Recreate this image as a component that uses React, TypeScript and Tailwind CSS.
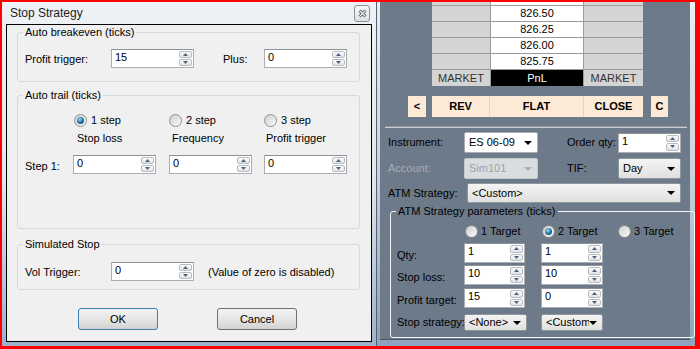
import React from 'react';

const Spinner: React.FC = () => (
  <div className="flex w-[14px] flex-col gap-px py-px pr-px">
    {['up', 'down'].map((d) => (
      <div
        key={d}
        className="flex flex-1 items-center justify-center rounded-[2px] border border-[#b9bcc2] bg-linear-to-b from-[#fbfbfb] to-[#e1e3e6]"
      >
        <svg width="5" height="3" viewBox="0 0 5 3">
          <path d={d === 'up' ? 'M0 3L2.5 0L5 3Z' : 'M0 0L2.5 3L5 0Z'} fill="#4d6082" />
        </svg>
      </div>
    ))}
  </div>
);

interface NumBoxProps {
  value: string;
  className: string;
}

const NumBox: React.FC<NumBoxProps> = ({ value, className }) => (
  <div className={`flex shrink-0 border border-[#abadb3] border-t-[#8f9198] bg-white ${className}`}>
    <span className="flex-1 pl-[3px] pt-px text-black">{value}</span>
    <Spinner />
  </div>
);

const Radio: React.FC<{ checked?: boolean }> = ({ checked }) => (
  <span className="flex h-[13px] w-[13px] shrink-0 items-center justify-center rounded-full border border-[#8e8f8f] bg-linear-to-br from-[#cfcfcf] to-[#fafafa]">
    {checked ? (
      <span className="h-[7px] w-[7px] rounded-full bg-[radial-gradient(circle_at_40%_35%,#9fdcf5,#1b6d9c_55%,#0c3d5e)]" />
    ) : (
      <span className="h-[7px] w-[7px] rounded-full bg-linear-to-br from-[#d6d6d6] to-[#f2f2f2]" />
    )}
  </span>
);

interface ComboProps {
  value: string;
  className: string;
  variant?: 'white' | 'button' | 'disabled';
}

const Combo: React.FC<ComboProps> = ({ value, className, variant = 'button' }) => {
  const look =
    variant === 'disabled'
      ? 'border-[#c3c8cd] bg-[#dadde0] text-[#9ba1a7]'
      : variant === 'white'
        ? 'border-[#abadb3] bg-white text-black'
        : 'border-[#8f969e] bg-linear-to-b from-[#f4f4f4] to-[#e0e0e0] text-black';
  return (
    <div className={`flex shrink-0 items-center justify-between rounded-[2px] border pl-[4px] pr-[5px] ${look} ${className}`}>
      <span className="overflow-hidden whitespace-nowrap">{value}</span>
      <svg width="8" height="4" viewBox="0 0 8 4" className="shrink-0">
        <path d="M0 0H8L4 4Z" fill={variant === 'disabled' ? '#a9afb5' : '#000'} />
      </svg>
    </div>
  );
};

const ladderPrices = ['826.50', '826.25', '826.00', '825.75'];

const StopStrategyDialog: React.FC = () => (
  <div className="flex h-[344px] w-[374px] shrink-0 flex-col bg-linear-to-b from-[#eef1f5] via-[#e3e8ee] to-[#9db1cb] px-[4px] pb-[4px]">
    <div className="flex h-[22px] items-center justify-between pl-[4px] pr-[2px]">
      <span className="text-[12px] text-[#1e1e1e]">Stop Strategy</span>
      <div className="flex h-[17px] w-[16px] items-center justify-center rounded-[3px] border border-[#8b9196] bg-linear-to-b from-[#f7f8fa] to-[#dde1e6]">
        <svg width="9" height="9" viewBox="0 0 9 9">
          <path d="M1.5 1.5L7.5 7.5M7.5 1.5L1.5 7.5" stroke="#4a4f55" strokeWidth="3" />
          <path d="M1.5 1.5L7.5 7.5M7.5 1.5L1.5 7.5" stroke="#f2f2f2" strokeWidth="1.2" />
        </svg>
      </div>
    </div>

    <div className="flex h-[318px] flex-col border border-black bg-[#f0f0f0]">
      {/* Auto breakeven */}
      <fieldset className="ml-[10px] mt-px h-[56px] w-[343px] rounded-[3px] border border-[#d5d9dd]">
        <legend className="ml-[5px] px-[2px] text-black">Auto breakeven (ticks)</legend>
        <div className="mt-[10px] flex items-start pl-[7px]">
          <span className="mt-[4px] w-[86px]">Profit trigger:</span>
          <NumBox value="15" className="h-[19px] w-[83px]" />
          <span className="ml-[29px] mt-[4px] w-[41px]">Plus:</span>
          <NumBox value="0" className="h-[19px] w-[83px]" />
        </div>
      </fieldset>

      {/* Auto trail */}
      <fieldset className="ml-[10px] mt-[7px] h-[140px] w-[343px] rounded-[3px] border border-[#d5d9dd]">
        <legend className="ml-[5px] px-[2px] text-black">Auto trail (ticks)</legend>
        <div className="mt-[12px] flex h-[13px] pl-[56px]">
          {['1 step', '2 step', '3 step'].map((s, i) => (
            <div key={s} className="flex w-[95px] items-center gap-[4px]">
              <Radio checked={i === 0} />
              <span>{s}</span>
            </div>
          ))}
        </div>
        <div className="mt-[5px] flex pl-[59px]">
          <span className="w-[95px]">Stop loss</span>
          <span className="w-[94px]">Frequency</span>
          <span>Profit trigger</span>
        </div>
        <div className="mt-[10px] flex items-start pl-[7px]">
          <span className="mt-[5px] w-[48px]">Step 1:</span>
          <NumBox value="0" className="h-[19px] w-[83px]" />
          <NumBox value="0" className="ml-[13px] h-[19px] w-[83px]" />
          <NumBox value="0" className="ml-[12px] h-[19px] w-[83px]" />
        </div>
      </fieldset>

      {/* Simulated stop */}
      <fieldset className="ml-[10px] mt-[9px] h-[52px] w-[343px] rounded-[3px] border border-[#d5d9dd]">
        <legend className="ml-[5px] px-[2px] text-black">Simulated Stop</legend>
        <div className="mt-[11px] flex items-start pl-[7px]">
          <span className="mt-[4px] w-[86px]">Vol Trigger:</span>
          <NumBox value="0" className="h-[19px] w-[83px]" />
          <span className="ml-[14px] mt-[4px]">(Value of zero is disabled)</span>
        </div>
      </fieldset>

      <div className="mt-[18px] flex">
        <button className="ml-[71px] h-[22px] w-[80px] rounded-[3px] border border-[#3c7fb1] bg-linear-to-b from-[#f3f3f3] via-[#e6e6e6] to-[#d2d2d2] text-black">
          OK
        </button>
        <button className="ml-[59px] h-[22px] w-[80px] rounded-[3px] border border-[#707070] bg-linear-to-b from-[#f3f3f3] via-[#e6e6e6] to-[#d2d2d2] text-black">
          Cancel
        </button>
      </div>
    </div>
  </div>
);

const OrderPanel: React.FC = () => (
  <div className="flex h-[344px] w-[319px] shrink-0 flex-col border-l border-[#56606c] bg-linear-to-b from-[#e9edf1] via-[#c9d2dc] to-[#8ea2bd] pb-[6px] pl-[3px] pr-[5px]">
    <div className="flex h-[338px] w-[310px] flex-col border-b border-[#4b5561] bg-[#6c7a89]">
      {/* price ladder */}
      <div className="ml-[52px] grid w-[211px] grid-cols-[59px_93px_59px]">
        <div className="h-[4px] border-b border-r border-[#9c9c9c] bg-[#d4d4d4]" />
        <div className="h-[4px] border-b border-r border-[#9c9c9c] bg-white" />
        <div className="h-[4px] border-b border-[#9c9c9c] bg-[#d4d4d4]" />
        {ladderPrices.map((p) => (
          <React.Fragment key={p}>
            <div className="h-[16px] border-b border-r border-[#9c9c9c] bg-[#d4d4d4]" />
            <div className="flex h-[16px] items-center justify-center border-b border-r border-[#9c9c9c] bg-white text-black">
              {p}
            </div>
            <div className="h-[16px] border-b border-[#9c9c9c] bg-[#d4d4d4]" />
          </React.Fragment>
        ))}
        <div className="flex h-[16px] items-center justify-center border-r border-[#9c9c9c] bg-[#d4d4d4] text-[#333]">
          MARKET
        </div>
        <div className="flex h-[16px] items-center justify-center border-r border-[#9c9c9c] bg-black text-white">
          PnL
        </div>
        <div className="flex h-[16px] items-center justify-center bg-[#d4d4d4] text-[#333]">MARKET</div>
      </div>

      {/* action buttons */}
      <div className="mt-[10px] flex h-[21px] font-bold text-black">
        <div className="ml-[28px] flex w-[18px] items-center justify-center bg-[#fce9d6]">&lt;</div>
        <div className="ml-[6px] flex w-[58px] items-center justify-center border-r border-[#ead3bd] bg-[#fce9d6]">REV</div>
        <div className="flex w-[94px] items-center justify-center border-r border-[#ead3bd] bg-[#fce9d6]">FLAT</div>
        <div className="flex w-[59px] items-center justify-center bg-[#fce9d6]">CLOSE</div>
        <div className="ml-[8px] flex w-[17px] items-center justify-center bg-[#fce9d6]">C</div>
      </div>

      <div className="ml-[5px] mt-[9px] h-[2px] w-[302px] border-t border-[#8e99a5] bg-[#c9cdd2]" />

      <div className="mt-[4px] flex h-[21px] items-center">
        <span className="ml-[8px] w-[76px] text-black">Instrument:</span>
        <Combo value="ES 06-09" variant="white" className="h-[21px] w-[74px]" />
        <span className="ml-[29px] w-[51px] text-black">Order qty:</span>
        <NumBox value="1" className="h-[20px] w-[63px]" />
      </div>

      <div className="mt-[5px] flex h-[21px] items-center">
        <span className="ml-[8px] w-[76px] text-[#a4adb7]">Account:</span>
        <Combo value="Sim101" variant="disabled" className="h-[21px] w-[74px]" />
        <span className="ml-[29px] w-[51px] text-black">TIF:</span>
        <Combo value="Day" className="h-[21px] w-[63px]" />
      </div>

      <div className="mt-[4px] flex h-[20px] items-center">
        <span className="ml-[8px] w-[79px] text-black">ATM Strategy:</span>
        <Combo value="<Custom>" className="h-[20px] w-[214px]" />
      </div>

      <fieldset className="ml-[10px] mt-[2px] h-[133px] w-[298px] rounded-[3px] border border-[#f4f6f8]">
        <legend className="ml-[5px] px-[2px] text-black">ATM Strategy parameters (ticks)</legend>
        <div className="mt-[7px] flex h-[13px] pl-[74px]">
          {['1 Target', '2 Target', '3 Target'].map((t, i) => (
            <div key={t} className={`flex items-center gap-[3px] ${i === 0 ? 'w-[77px]' : 'w-[76px]'}`}>
              <Radio checked={i === 1} />
              <span className="text-black">{t}</span>
            </div>
          ))}
        </div>
        <div className="mt-[5px] flex items-start pl-[6px]">
          <span className="mt-[6px] w-[67px] text-black">Qty:</span>
          <NumBox value="1" className="h-[20px] w-[61px]" />
          <NumBox value="1" className="ml-[16px] h-[20px] w-[62px]" />
        </div>
        <div className="mt-[2px] flex items-start pl-[6px]">
          <span className="mt-[6px] w-[67px] text-black">Stop loss:</span>
          <NumBox value="10" className="h-[20px] w-[61px]" />
          <NumBox value="10" className="ml-[16px] h-[20px] w-[62px]" />
        </div>
        <div className="mt-[3px] flex items-start pl-[6px]">
          <span className="mt-[6px] w-[67px] text-black">Profit target:</span>
          <NumBox value="15" className="h-[20px] w-[61px]" />
          <NumBox value="0" className="ml-[16px] h-[20px] w-[62px]" />
        </div>
        <div className="mt-[6px] flex items-center pl-[6px]">
          <span className="w-[67px] whitespace-nowrap text-black">Stop strategy:</span>
          <Combo value="<None>" className="h-[17px] w-[63px]" />
          <Combo value="<Custom>" className="ml-[14px] h-[17px] w-[62px]" />
        </div>
      </fieldset>
    </div>
  </div>
);

const App: React.FC = () => (
  <div className="h-[349px] w-[700px] overflow-hidden border-b-[3px] border-l-2 border-r-[5px] border-t-2 border-[#ff0000] font-['Liberation_Sans',Arial,sans-serif] text-[11px] leading-[13px] text-black">
    <div className="flex h-[344px]">
      <StopStrategyDialog />
      <OrderPanel />
    </div>
  </div>
);

export default App;
